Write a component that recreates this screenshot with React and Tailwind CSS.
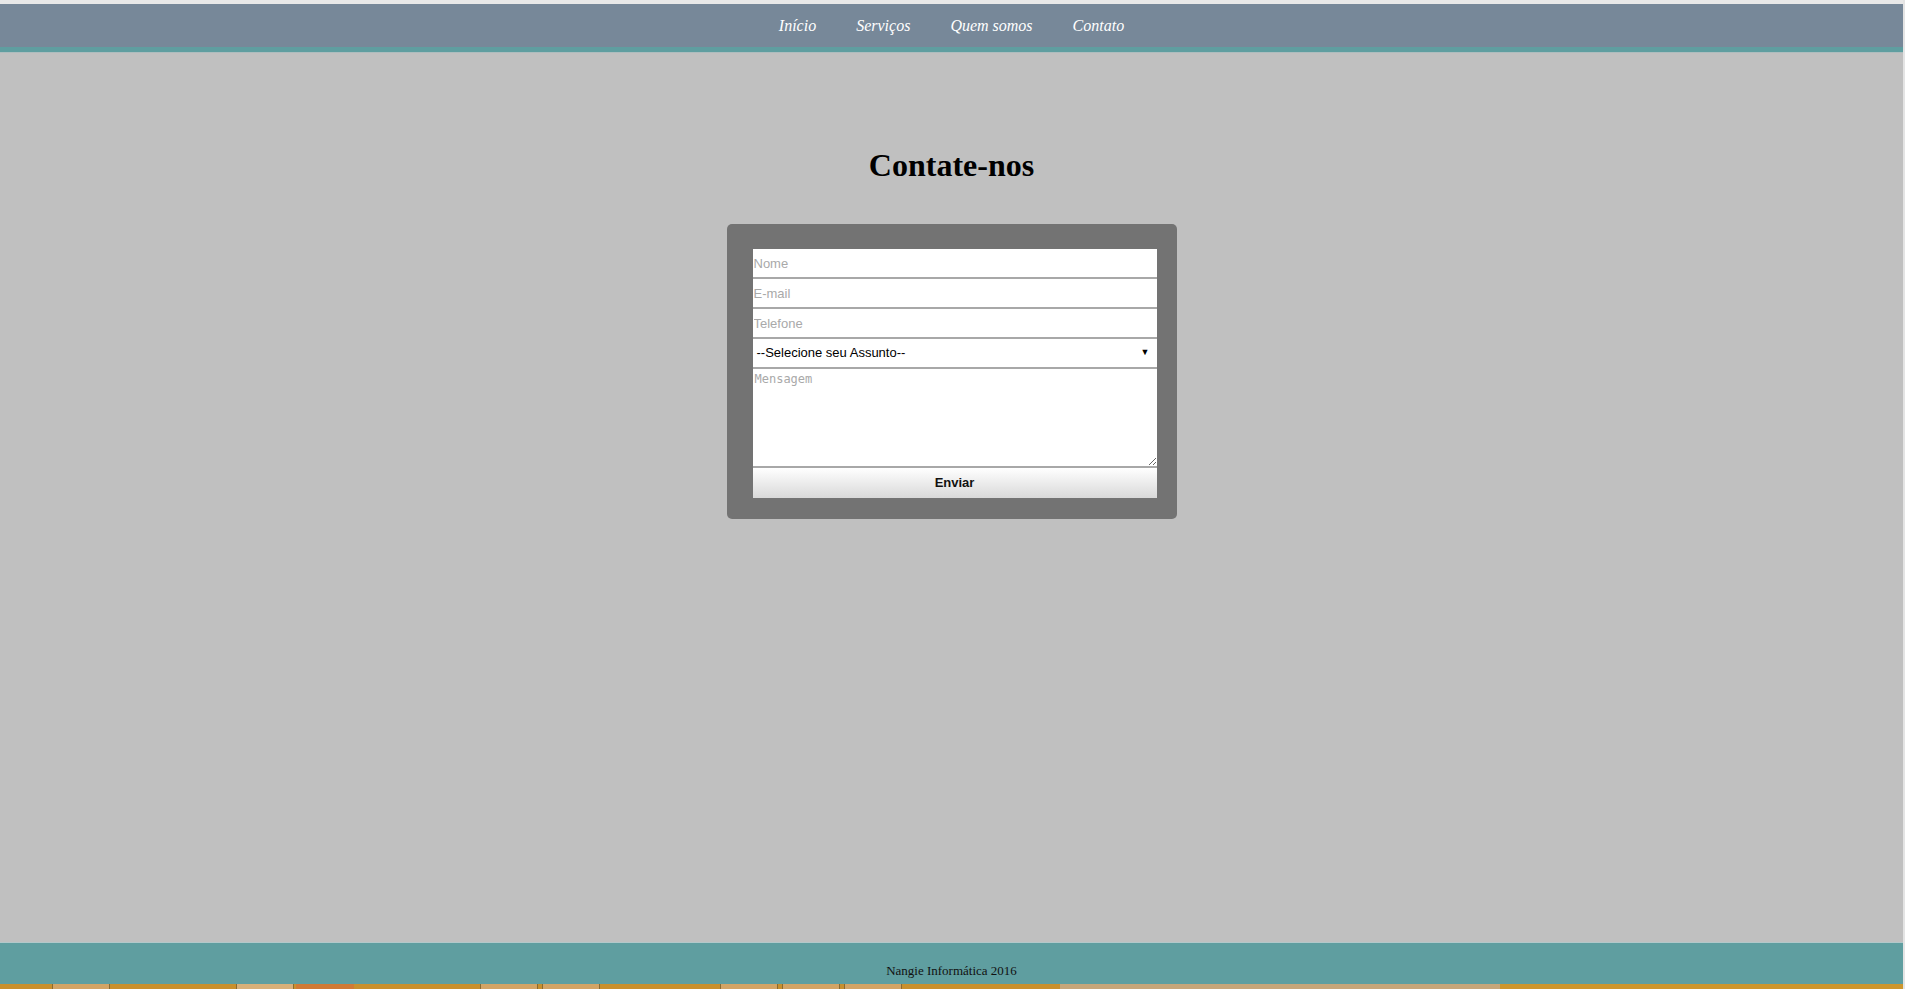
import React from 'react';

const links = ['Início', 'Serviços', 'Quem somos', 'Contato'];

const field =
  'block w-[404px] h-[30px] bg-white border-b-2 border-[#a8a8a8] px-[1px] text-[13px] text-black outline-none placeholder:text-[#a9a9a9] font-["Liberation_Sans",Arial,sans-serif]';

export default function App() {
  return (
    <div className="h-screen flex bg-[#e4e4e4] overflow-hidden">
      <div className="w-[1903px] h-full flex flex-col bg-[#c0c0c0]">
        <div className="h-[4px] bg-[#e8e8e8]" />

        {/* menu */}
        <nav className="h-[43px] bg-[#778899] flex justify-center items-center gap-[40px] font-['Liberation_Serif',serif] italic text-[16px] text-white">
          {links.map((l) => (
            <a key={l} href="#" className="leading-none">
              {l}
            </a>
          ))}
        </nav>
        <div className="h-[5px] bg-[#5f9ea0]" />
        <div className="h-[1px] bg-[#aebdbe]" />

        <main className="flex-1 flex flex-col items-center pt-[94px]">
          <h1 className="font-['Liberation_Serif',serif] font-bold text-[32px] leading-[37px] text-black">
            Contate-nos
          </h1>

          <form className="mt-[40px] w-[450px] rounded-[5px] bg-[#737373] pt-[25px] pl-[26px] pr-[20px] pb-[21px]">
            <input className={field} placeholder="Nome" />
            <input className={field} placeholder="E-mail" />
            <input className={field} placeholder="Telefone" />
            <div className="relative w-[404px] h-[30px] bg-white border-b-2 border-[#a8a8a8] flex items-center pl-[4px] text-[13px] text-black font-['Liberation_Sans',Arial,sans-serif]">
              --Selecione seu Assunto--
              <span className="absolute right-[7px] top-[9px] text-[9px] leading-none">▼</span>
            </div>
            <textarea
              className="block w-[404px] h-[99px] bg-white border-b-2 border-[#a8a8a8] px-[2px] pt-[3px] text-[12px] leading-[15px] outline-none placeholder:text-[#a9a9a9] font-['DejaVu_Sans_Mono',monospace]"
              placeholder="Mensagem"
            />
            <button
              type="button"
              className="block w-[404px] h-[30px] bg-gradient-to-b from-white to-[#d9d9d9] text-[13px] font-bold text-[#111] font-['Liberation_Sans',Arial,sans-serif]"
            >
              Enviar
            </button>
          </form>
        </main>

        {/* rodape */}
        <div className="h-[1px] bg-[#b2c8ca]" />
        <footer className="h-[41px] bg-[#5f9ea0] flex justify-center pt-[20px] font-['Liberation_Serif',serif] text-[13px] leading-[15px] text-[#111]">
          Nangie Informática 2016
        </footer>
        <div className="h-[5px] flex">
          <div className="w-[1060px] bg-[#c8902e] flex items-stretch">
            <div className="ml-[52px] w-[58px] bg-[#d3a465] border-x border-[#8a6a30]" />
            <div className="ml-[126px] w-[58px] bg-[#d8b079] border-x border-[#8a6a30]" />
            <div className="ml-[2px] w-[58px] bg-[#d07a35]" />
            <div className="ml-[126px] w-[58px] bg-[#d3a465] border-x border-[#8a6a30]" />
            <div className="ml-[4px] w-[58px] bg-[#d3a465] border-x border-[#8a6a30]" />
            <div className="ml-[120px] w-[58px] bg-[#d3a465] border-x border-[#8a6a30]" />
            <div className="ml-[4px] w-[58px] bg-[#d3a465] border-x border-[#8a6a30]" />
            <div className="ml-[4px] w-[58px] bg-[#d3a465] border-x border-[#8a6a30]" />
          </div>
          <div className="w-[440px] bg-[#c6a67a]" />
          <div className="flex-1 bg-[#cc962e]" />
        </div>
      </div>
    </div>
  );
}
